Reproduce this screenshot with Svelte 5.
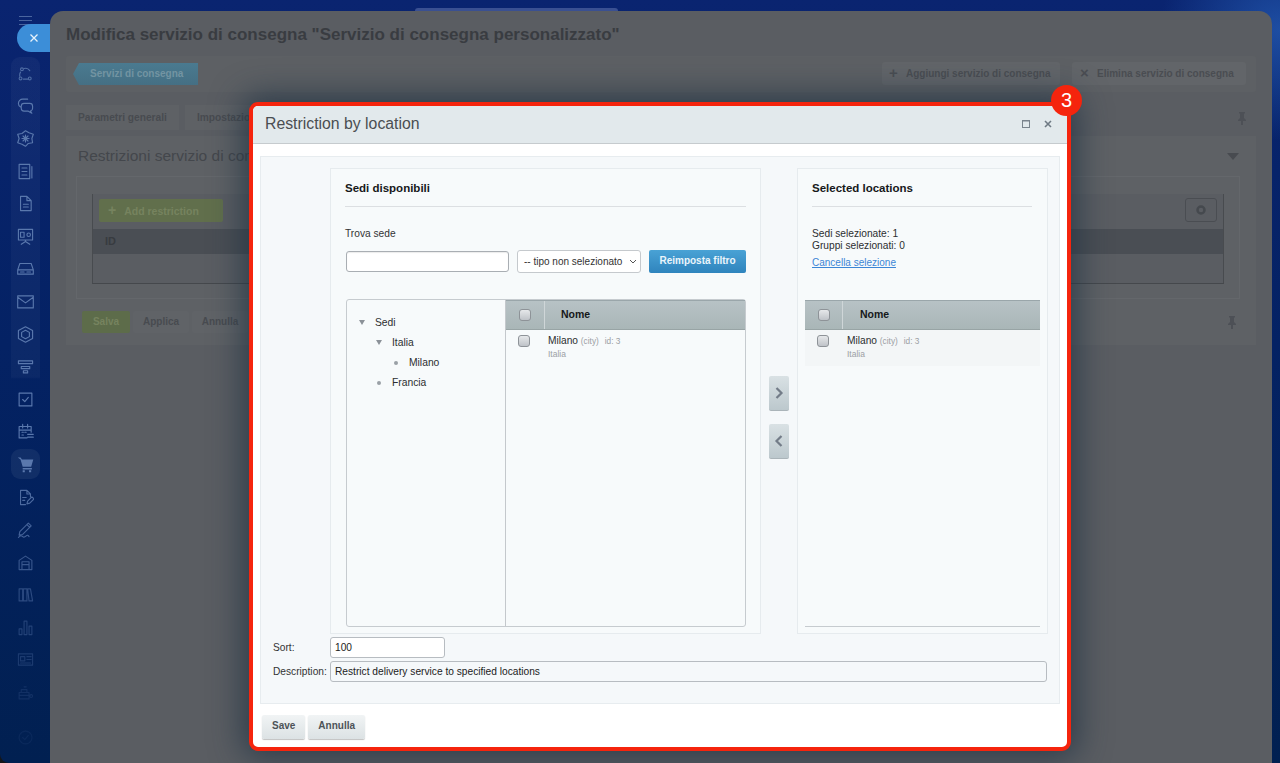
<script>
  const icons = [
    { o: 0.85, d: 'M10 5a7 7 0 0 1 8 3M5 10a8 8 0 0 0-1 6M9 20h6', c: [[7,6,2],[5,19,2],[18,19,2]] },
    { o: 1, d: 'M15 3H8a6 6 0 0 0-6 6c0 2 1 4 3 5M10 9h8a4 4 0 0 1 4 4v3a4 4 0 0 1-3 4l2 3-5-3h-6a4 4 0 0 1-4-4v-3a4 4 0 0 1 4-4z' },
    { o: 1, d: 'M12 1l5 3 6 2-2 6 1 6-6 1-4 4-5-3-6-2 2-6-2-6 6-1zM12 7v10M7 12h10M8.500 8.500l7 7M15.500 8.500l-7 7' },
    { o: 1, d: 'M3 2h15v20H3zM7 7h7M7 12h7M7 17h7M21 5v16' },
    { o: 1, d: 'M5 2h9l6 6v14H5zM14 2v6h6M9 13h7M9 17h7' },
    { o: 1, d: 'M2 2h20v15H2zM12 17v2M6 23l6-4 6 4M5 6h5v7H5zM14 9.500a2.500 2.500 0 1 0 5 0 2.500 2.500 0 1 0-5 0' },
    { o: 1, d: 'M1 14l3-9h16l3 9v6H1zM1 14h22M5 17h5M14 17h5' },
    { o: 1, d: 'M1 4h22v17H1zM1 6l11 8 11-8' },
    { o: 1, d: 'M12 1l10 5.500v11L12 23 2 17.500v-11zM12 6l5.500 3v6L12 18l-5.500-3V9z' },
    { o: 1, d: 'M2 4h20v4H2zM6 12h12v3H6zM9 18h6v3H9z' },
    { o: 1, d: 'M3 3h18v18H3zM8 12l3 3 5-6' },
    { o: 1, d: 'M14 21H3V5h17v8M8 2v5M15 2v5M3 10h17M7 13h2M11 13h2M7 17h2M15 16h8M15 20h8' },
    { o: 1, fill: true, d: 'M1 2h4l2 3h16l-3 10H8L5 5zM8 17h13v2H8zM8 20h3v3H8zM17 20h3v3h-3z' },
    { o: 0.85, d: 'M14 2H5v20h7M14 2l5 5v4M14 2v5h5M8 12h5M8 16h3M14 21l1-4 6-6 3 3-6 6z' },
    { o: 0.75, d: 'M4 15L16 3l4 4L8 19l-5 1zM14 5l4 4M2 23c3-3 4-3 6-1s3 1 5-1 3 0 4 1' },
    { o: 0.62, d: 'M3 22V9l9-6 9 6v13zM7 22V11h10v11M7 15h10' },
    { o: 0.48, d: 'M3 4h5v17H3zM9 4h5v17H9zM15 4l4 0 3 17h-5z' },
    { o: 0.38, d: 'M3 14h4v8H3zM10 3h4v19h-4zM17 10h4v12h-4z' },
    { o: 0.3, d: 'M2 4h20v16H2zM5 8h6v6H5zM14 8h6M14 12h6M5 17h14' },
    { o: 0.18, d: 'M3 12h14v9H3zM6 12V8h8v4M3 16h14M20 15a2 2 0 1 0 .1 0M10 4h3' },
    { o: 0.1, last: true, d: 'M12 3a9 9 0 1 0 .1 0M8 12l3 3 5-6' }
  ];
  const tree = [
    { label: 'Sedi', depth: 0, open: true },
    { label: 'Italia', depth: 1, open: true },
    { label: 'Milano', depth: 2 },
    { label: 'Francia', depth: 1 }
  ];
</script>

<div class="root">
  <span class="sliver"></span>
  <aside class="rail">
    <div class="burger"><i></i><i></i><i></i></div>
    <div class="close-tab">
      <svg width="10" height="10" viewBox="0 0 10 10"><path d="M1.500 1.500l7 7M8.500 1.500l-7 7" stroke="#e8f2fb" stroke-width="1.300" /></svg>
    </div>
    <div class="icon-group">
      {#each icons as ic, i}
        <div class="icon" class:active={i === 12} class:last={ic.last}>
          <svg style="opacity:{ic.o}" width="17" height="17" viewBox="0 0 24 24" fill={ic.fill ? '#5a78ad' : 'none'} stroke={ic.fill ? 'none' : '#5a78ad'} stroke-width="1.600" stroke-linejoin="round" stroke-linecap="round">
            <path d={ic.d} />
            {#if ic.c}{#each ic.c as c}<circle cx={c[0]} cy={c[1]} r={c[2]} />{/each}{/if}
          </svg>
        </div>
      {/each}
    </div>
  </aside>

  <main class="page">
    <h1>Modifica servizio di consegna "Servizio di consegna personalizzato"</h1>
    <div class="toolbar">
      <span class="back">Servizi di consegna</span>
      <span class="spacer"></span>
      <span class="tool add-s"><b class="sign">+</b>Aggiungi servizio di consegna</span>
      <span class="tool del-s"><b class="sign">×</b>Elimina servizio di consegna</span>
    </div>
    <div class="tabs">
      <span class="tab">Parametri generali</span>
      <span class="tab">Impostazioni</span>
      <span class="spacer"></span>
      <svg class="pin" width="10" height="14" viewBox="0 0 10 14"><path d="M2 1h6v1L7 3v4l2 2v1H6v4H4v-4H1V9l2-2V3L2 2z" fill="#4d5056" /></svg>
    </div>
    <section class="panel">
      <div class="panel-head">
        <h2>Restrizioni servizio di consegna</h2>
        <span class="caret"></span>
      </div>
      <div class="inner">
        <div class="grid">
          <div class="grid-top">
            <span class="add"><b class="plus">+</b>Add restriction</span>
            <span class="gear">
              <svg width="12" height="12" viewBox="0 0 12 12"><circle cx="6" cy="6" r="3.500" fill="none" stroke="#45494e" stroke-width="2.500" /></svg>
            </span>
          </div>
          <div class="grid-head">ID</div>
          <div class="grid-body"></div>
        </div>
      </div>
      <div class="actions">
        <span class="act green">Salva</span>
        <span class="act">Applica</span>
        <span class="act">Annulla</span>
        <span class="spacer"></span>
        <svg class="pin2" width="10" height="14" viewBox="0 0 10 14"><path d="M2 1h6v1L7 3v4l2 2v1H6v4H4v-4H1V9l2-2V3L2 2z" fill="#4d5056" /></svg>
      </div>
    </section>
  </main>

  <div class="modal">
    <header class="m-head">
      <span class="m-title">Restriction by location</span>
      <svg class="m-max" width="8" height="8" viewBox="0 0 8 8"><rect x=".5" y=".5" width="7" height="7" fill="none" stroke="#7a848d" /><path d="M0 1h8" stroke="#7a848d" /></svg>
      <svg class="m-close" width="8" height="8" viewBox="0 0 8 8"><path d="M1 1l6 6M7 1L1 7" stroke="#6f7a84" stroke-width="1.600" /></svg>
    </header>

    <div class="m-body">
      <div class="columns">
        <div class="col left">
          <h3>Sedi disponibili</h3>
          <div class="find-label">Trova sede</div>
          <div class="filters">
            <input class="find" type="text" />
            <span class="type-wrap">
              <select class="type"><option>-- tipo non selezionato</option></select>
              <svg class="chev" width="8" height="5" viewBox="0 0 8 5"><path d="M1 1l3 3 3-3" fill="none" stroke="#555" stroke-width="1" /></svg>
            </span>
            <span class="reset">Reimposta filtro</span>
          </div>
          <div class="browser">
            <ul class="tree">
              {#each tree as n}
                <li class="d{n.depth}">
                  {#if n.open}<span class="tri"></span>{:else}<span class="dot"></span>{/if}
                  {n.label}
                </li>
              {/each}
            </ul>
            <div class="list">
              <div class="l-head"><span class="l-chk"><span class="chk"></span></span><span class="l-name">Nome</span></div>
              <div class="l-row">
                <span class="chk r"></span>
                <div class="l-text">
                  <div>Milano <small>(city)</small> <small class="id">id: 3</small></div>
                  <div class="sub">Italia</div>
                </div>
              </div>
            </div>
          </div>
        </div>

        <div class="mover">
          <span class="arrow"><svg width="10" height="16" viewBox="0 0 10 16"><path d="M2.500 3l5 5-5 5" fill="none" stroke="#737c88" stroke-width="2.200" /></svg></span>
          <span class="arrow"><svg width="10" height="16" viewBox="0 0 10 16"><path d="M7.500 3l-5 5 5 5" fill="none" stroke="#737c88" stroke-width="2.200" /></svg></span>
        </div>

        <div class="col right">
          <h3>Selected locations</h3>
          <div class="counts">
            <div>Sedi selezionate: 1</div>
            <div>Gruppi selezionati: 0</div>
            <a href="#top" class="clear">Cancella selezione</a>
          </div>
          <div class="list sel">
            <div class="l-head"><span class="l-chk"><span class="chk"></span></span><span class="l-name">Nome</span></div>
            <div class="l-row tint">
              <span class="chk r"></span>
              <div class="l-text">
                <div>Milano <small>(city)</small> <small class="id">id: 3</small></div>
                <div class="sub">Italia</div>
              </div>
            </div>
          </div>
        </div>
      </div>

      <div class="field sort">
        <label for="sort">Sort:</label>
        <input id="sort" type="text" value="100" />
      </div>
      <div class="field desc">
        <label for="desc">Description:</label>
        <input id="desc" type="text" value="Restrict delivery service to specified locations" />
      </div>
    </div>

    <footer class="m-foot">
      <span class="btn">Save</span>
      <span class="btn">Annulla</span>
    </footer>
  </div>

  <span class="badge">3</span>
</div>

<style>
  :global(body) { margin: 0; background: #14161a; }
  * { box-sizing: border-box; }
  .root {
    position: relative;
    width: 1280px;
    height: 763px;
    overflow: hidden;
    display: flex;
    font-family: "Liberation Sans", Arial, sans-serif;
    border-bottom-left-radius: 9px;
    background:
      radial-gradient(120px 110px at 100% 30px, rgba(40, 100, 190, .65), rgba(40, 100, 190, 0)),
      linear-gradient(180deg, #0a2470 0%, #042264 45%, #012051 100%);
  }
  .sliver { position: absolute; left: 415px; top: 8px; width: 203px; height: 3px; border-radius: 3px 3px 0 0; background: #3a5092; }
  .rail { width: 50px; flex: none; position: relative; padding-top: 16px; }
  .burger { margin-left: 19px; width: 13px; display: flex; flex-direction: column; gap: 3px; }
  .burger i { display: block; height: 1px; background: #4a659f; }
  .close-tab {
    position: absolute; left: 17px; top: 24px; width: 33px; height: 28px;
    background: #3c8ed8; border-radius: 14px 0 0 14px;
    display: flex; align-items: center; justify-content: center;
  }
  .icon-group {
    margin: 32px 0 0 11px; width: 29px;
    display: flex; flex-direction: column;
    background: linear-gradient(180deg, rgba(255,255,255,.035) 0, rgba(255,255,255,.03) 320px, rgba(255,255,255,0) 322px);
    border-radius: 9px;
  }
  .icon { height: 32.600px; display: flex; align-items: center; justify-content: center; flex: none; }
  .icon.active { background: rgba(255,255,255,.06); border-radius: 9px; height: 30px; margin: 1.300px 0; }
  .icon.last { margin-top: 12px; }

  .page {
    flex: none; width: 1222px; height: 760px; margin-top: 11px;
    background: #5a5d62; border-radius: 13px 13px 0 0;
    padding: 0 16px; color: #46494e;
  }
  h1 { margin: 0; padding-top: 14px; height: 45px; font-size: 17px; line-height: 20px; font-weight: 700; color: #393c41; }
  .toolbar {
    display: flex; align-items: center; height: 36px; padding: 0 10px 0 7px;
    background: #5d6064; border-radius: 3px;
  }
  .back {
    height: 22px; line-height: 22px; padding: 0 0 0 17px; width: 125px;
    background: linear-gradient(180deg, #4a7a90, #456f84); color: #7394a2; font-size: 10px; font-weight: 700;
    clip-path: polygon(6px 0, 100% 0, 100% 100%, 6px 100%, 0 50%);
  }
  .spacer { flex: 1; }
  .tool {
    height: 23px; line-height: 22px; background: #626569; margin-top: -2px;
    border-radius: 3px; font-size: 10px; font-weight: 700; color: #4a4d52; white-space: nowrap;
  }
  .add-s { width: 178px; padding-left: 7px; }
  .del-s { width: 174px; padding-left: 8px; margin-left: 12px; }
  .sign { display: inline-block; width: 17px; font-size: 15px; vertical-align: -1px; }
  .tabs { display: flex; align-items: center; height: 31px; margin-top: 13px; gap: 6px; padding-bottom: 6px; padding-right: 9px; }
  .tab {
    height: 25px; line-height: 25px; padding: 0 12px; background: #5e6165;
    font-size: 10.200px; font-weight: 700; color: #484b50;
  }
  .panel { height: 209px; background: #5e6165; }
  .panel-head { display: flex; align-items: center; justify-content: space-between; height: 40px; padding: 0 17px 0 12px; }
  h2 { margin: 0; font-size: 15.500px; font-weight: 400; color: #44474c; white-space: nowrap; }
  .caret { width: 0; height: 0; border: 6px solid transparent; border-top: 7px solid #484b50; border-bottom: 0; }
  .inner { margin: 0 16px 0 10px; height: 123px; border: 1px solid #64676b; padding: 17px 15px 0; }
  .grid { border-bottom: 1px solid #45484c; border-left: 1px solid #484b4f; border-right: 1px solid #484b4f; }
  .grid-top { height: 35px; display: flex; align-items: center; justify-content: space-between; padding: 0 6px 3px; background: #5a5d62; }
  .add {
    height: 23px; line-height: 23px; width: 124px; padding-left: 9px; background: #616f4c; color: #76835f;
    font-size: 10.500px; font-weight: 700; border-radius: 2px;
  }
  .plus { margin-right: 8px; font-size: 14px; }
  .gear { width: 32px; height: 24px; border: 1px solid #4a4d52; border-radius: 3px; display: flex; align-items: center; justify-content: center; }
  .grid-head { height: 25px; line-height: 25px; background: #4a4e54; padding-left: 12px; font-size: 11px; font-weight: 700; color: #383b40; }
  .grid-body { height: 29px; background: #5a5d62; }
  .actions { display: flex; align-items: center; gap: 3px; height: 22px; margin-top: 12px; padding: 0 19px 0 16px; }
  .act { height: 22px; line-height: 22px; width: 56px; text-align: center; background: #606367; font-size: 10px; font-weight: 700; color: #484b50; border-radius: 2px; }
  .act.green { width: 48px; background: #5d6c4a; color: #76835f; }

  .modal {
    position: absolute; left: 249px; top: 102px; width: 822px; height: 649px;
    border: 4px solid #f5240d; border-radius: 9px 6px 9px 9px; background: #fff;
    box-shadow: 0 0 32px 6px rgba(30, 48, 66, .75);
    display: flex; flex-direction: column; color: #222; font-size: 10.200px; overflow: hidden;
  }
  .m-head {
    flex: none; height: 38px; display: flex; align-items: center; gap: 14px;
    padding: 0 15px 2px 12px; background: #e2e9ec; border-bottom: 1px solid #c6cbce;
  }
  .m-title { flex: 1; font-size: 15.800px; color: #4a4e52; }
  .m-body {
    flex: none; margin: 12px 7px 0; height: 548px; background: #f5f8fa;
    border: 1px solid #e7ecef; padding: 11px 12px 0 69px;
  }
  .columns { display: flex; height: 466px; }
  .col { height: 466px; background: #f7fafb; border: 1px solid #e6ebee; flex: none; }
  .left { width: 431px; padding: 0 14px 0 15px; }
  .right { width: 251px; padding: 0 7px; }
  h3 {
    margin: 0; height: 38px; padding: 12px 0 0; border-bottom: 1px solid #dcdfe2;
    font-size: 11.500px; line-height: 14px; color: #16181a; font-weight: 700;
  }
  .left h3 { margin-left: -1px; }
  .right h3 { margin: 0 8px 0 7px; }
  .find-label { margin: 20px 0 0 -1px; height: 22px; line-height: 14px; color: #333; }
  .filters { display: flex; align-items: center; height: 24px; }
  .find { width: 163px; height: 21px; border: 1px solid #a9aeb3; border-radius: 3px; background: #fff; padding: 0; box-shadow: inset 0 1px 1px rgba(0,0,0,.08); }
  .type-wrap { position: relative; display: block; width: 124px; height: 23px; margin-left: 8px; }
  .type {
    appearance: none; width: 124px; height: 23px; border: 1px solid #c5c9cd; border-radius: 3px;
    background: #fff; font: 10px "Liberation Sans", Arial, sans-serif; color: #333; padding: 0 0 0 6px;
  }
  .chev { position: absolute; right: 4px; top: 9px; }
  .reset {
    margin-left: 8px; width: 97px; height: 23px; line-height: 22px; text-align: center;
    background: linear-gradient(180deg, #49a2d5, #2f84bd); color: #eaf5fb; font-weight: 700; font-size: 10px; border-radius: 2px;
  }
  .browser { display: flex; margin-top: 26px; height: 328px; border: 1px solid #c6cbcf; border-radius: 3px; }
  .tree { list-style: none; margin: 0; padding: 13px 0 0; width: 159px; border-right: 1px solid #c4c8cc; flex: none; }
  .tree li { height: 20px; line-height: 20px; position: relative; color: #2c2e30; font-size: 10.300px; }
  .d0 { padding-left: 28px; }
  .d1 { padding-left: 45px; }
  .d2 { padding-left: 62px; }
  .tri {
    position: absolute; margin-left: -16px; top: 7px; width: 0; height: 0;
    border: 3.500px solid transparent; border-top: 5px solid #8b9198; border-bottom: 0;
  }
  .dot { position: absolute; margin-left: -15px; top: 8px; width: 4px; height: 4px; background: #9aa0a6; border-radius: 50%; }
  .list { flex: 1; }
  .l-head {
    display: flex; align-items: stretch; height: 30px;
    background: linear-gradient(180deg, #b7c2c5, #a9b6b7); border-top: 1px solid #9aa6aa; border-bottom: 1px solid #98a4a5;
  }
  .l-chk { width: 39px; border-right: 1px solid #cfd6d8; display: flex; align-items: center; justify-content: center; flex: none; }
  .l-name { padding-left: 16px; line-height: 27px; font-weight: 700; font-size: 10.500px; color: #16181a; }
  .chk {
    display: block; width: 12px; height: 12px; border-radius: 3px; border: 1px solid #8e9398;
    background: linear-gradient(180deg, #e6e8ea, #bfc3c8);
  }
  .chk.r { margin-top: 1px; }
  .l-row { display: flex; height: 36px; padding: 4px 0 0 12px; }
  .l-row.tint { background: #f3f6f7; }
  .l-text { margin-left: 18px; font-size: 10.200px; line-height: 14px; color: #2c2e30; }
  .l-row small { font-size: 8.300px; color: #9ba0a4; }
  .l-row small.id { margin-left: 3px; }
  .sub { font-size: 8.500px; color: #9ba0a4; line-height: 11px; margin-top: 1px; }
  .mover { width: 36px; flex: none; display: flex; flex-direction: column; align-items: center; gap: 13px; padding-top: 208px; }
  .arrow {
    width: 20px; height: 35px; border-radius: 2px; display: flex; align-items: center; justify-content: center;
    background: linear-gradient(180deg, #d9e1e4, #bcc8cd); border-bottom: 1px solid #aab4b9;
  }
  .counts { padding: 21px 0 0 7px; height: 93px; line-height: 12px; color: #2c2e30; }
  .clear { display: block; margin-top: 4px; color: #3c86d6; line-height: 14px; font-size: 10px; }
  .sel { height: 327px; border-bottom: 1px solid #c6cbcf; }
  .sel .l-chk { width: 38px; }
  .sel .l-name { padding-left: 17px; }
  .sel .l-row { padding-left: 12px; }
  .field { display: flex; align-items: center; margin-left: -57px; }
  .field label { width: 57px; flex: none; color: #333; white-space: nowrap; }
  .field input {
    border: 1px solid #b7bcc1; border-radius: 3px; background: #fff; height: 21px; padding: 0 4px;
    font: 10.200px "Liberation Sans", Arial, sans-serif; color: #222;
  }
  .sort { margin-top: 3px; }
  .sort input { width: 115px; }
  .desc { margin-top: 3px; }
  .desc input { width: 718px; background: #f5f8fa; }
  .m-foot { flex: 1; display: flex; align-items: flex-start; gap: 3px; padding: 11px 0 0 9px; }
  .btn {
    height: 24px; line-height: 22px; padding: 0 10px; border-radius: 2px; font-weight: 700; font-size: 10px; color: #4d5358;
    background: linear-gradient(180deg, #f1f4f5, #dce2e4); box-shadow: 0 1px 1px rgba(0,0,0,.25);
  }
  .badge {
    position: absolute; left: 1051px; top: 85px; width: 31px; height: 31px; border-radius: 50%;
    background: #f5240d; color: #fff; font-size: 20px; line-height: 31px; text-align: center;
  }
</style>
